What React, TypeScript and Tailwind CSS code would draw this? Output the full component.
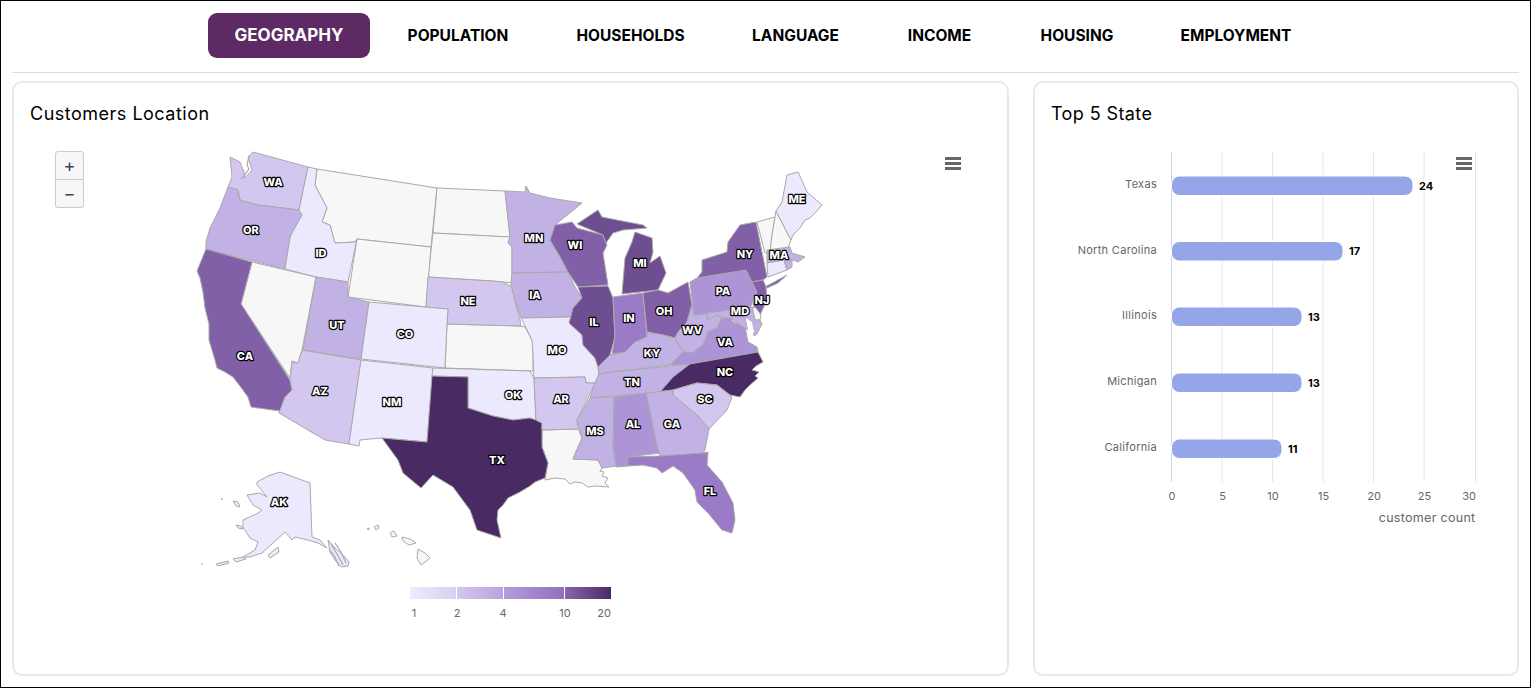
const FONT = "font-['Inter','Liberation_Sans',sans-serif]";

const C1 = '#ece8fd';
const C2 = '#d3c7ef';
const C3 = '#c2b1e4';
const C4 = '#ac94d7';
const C5 = '#9b7bc8';
const C6 = '#8160a8';
const C7 = '#6d4e91';
const C8 = '#4a2a63';
const NONE = '#f7f7f7';

const tabs = [
  { name: 'GEOGRAPHY', w: 'w-[162px]', active: true },
  { name: 'POPULATION', w: 'w-[154px] ml-[11px]' },
  { name: 'HOUSEHOLDS', w: 'w-[159px] ml-[16px]' },
  { name: 'LANGUAGE', w: 'w-[139px] ml-[16px]' },
  { name: 'INCOME', w: 'w-[117px] ml-[16px]' },
  { name: 'HOUSING', w: 'w-[126px] ml-[16px]' },
  { name: 'EMPLOYMENT', w: 'w-[160px] ml-[16px]' },
];

const states: { fill: string; d: string }[] = [
  { fill: NONE, d: '252,262 316,277 302,350 298,363 292,361 290,378 241,304' }, // NV
  { fill: NONE, d: '317,169 437,188 431,247 357,239 355,242 335,243 330,225 322,222 327,208 315,185' }, // MT
  { fill: NONE, d: '437,188 505,191 510,237 433,233' }, // ND
  { fill: NONE, d: '433,233 510,237 508,243 512,247 512,283 503,282 492,281 428,277' }, // SD
  { fill: NONE, d: '357,239 431,247 426,307 348,297' }, // WY
  { fill: NONE, d: '447,324 520,326 525,327 533,342 533,371 445,368' }, // KS
  { fill: NONE, d: '542,430 578,429 582,438 573,459 598,460 602,468 600,471 604,472 602,476 608,478 605,483 609,487 596,486 588,487 582,483 575,482 570,484 565,479 555,478 545,480 548,463 542,447' }, // LA
  { fill: NONE, d: '757,222 775,217 772,235 770,252 765,253' }, // VT
  { fill: NONE, d: '775,217 776,211 791,240 788,248 770,252 772,235' }, // NH
  { fill: C2, d: '253,152 308,167 299,210 283,208 257,205 240,200 238,190 228,187 232,177 230,157 240,162 244,172 245,178 252,170 248,157' }, // WA
  { fill: C3, d: '228,187 238,190 240,200 257,205 283,208 299,210 302,215 292,233 290,238 285,269 206,249 206,242 210,228 220,208' }, // OR
  { fill: C6, d: '206,249 252,262 241,304 290,380 292,390 285,397 280,411 251,407 248,397 240,386 233,377 225,372 217,368 215,360 209,340 209,324 205,308 203,292 200,278 197,271' }, // CA
  { fill: C1, d: '308,167 317,169 315,185 327,208 322,222 330,225 335,243 355,242 357,239 348,282 316,277 285,269 290,238 292,233 302,215 299,210' }, // ID
  { fill: C2, d: '428,277 492,281 503,282 512,287 515,302 520,320 521,326 447,324 448,309 426,307' }, // NE
  { fill: C3, d: '316,277 348,282 348,297 369,302 361,359 303,350' }, // UT
  { fill: C1, d: '369,302 448,309 447,324 445,368 361,359' }, // CO
  { fill: C2, d: '302,350 361,360 349,444 325,440 279,413 285,397 292,390 290,380 292,362 298,363' }, // AZ
  { fill: C1, d: '361,360 433,368 427,442 381,438 360,440 359,446 349,444' }, // NM
  { fill: C1, d: '433,368 530,371 534,378 536,420 530,418 513,420 493,416 468,408 468,377 432,376' }, // OK
  { fill: C8, d: '432,376 468,377 468,408 493,416 513,420 530,418 536,420 542,423 542,447 548,463 545,478 535,482 530,486 520,492 508,498 503,505 498,510 497,520 501,538 477,530 470,510 453,487 433,475 421,488 403,473 398,460 382,438 427,442' }, // TX
  { fill: C3, d: '505,191 525,192 526,186 530,193 550,198 582,203 555,225 550,240 559,255 568,272 512,273 512,247 508,243 510,237' }, // MN
  { fill: C3, d: '512,273 568,272 575,287 582,298 573,308 572,317 521,318 515,300 511,285' }, // IA
  { fill: C1, d: '521,318 572,317 570,323 582,335 583,345 595,358 598,367 599,374 595,383 586,383 585,377 534,378 533,355 532,340' }, // MO
  { fill: C2, d: '534,378 585,377 586,383 595,383 588,398 577,420 578,429 542,430 542,423 536,420' }, // AR
  { fill: C6, d: '555,225 572,222 577,228 603,235 607,245 603,253 608,285 578,287 568,272 559,255 550,240' }, // WI
  { fill: C7, d: '577,224 598,210 602,217 617,220 643,225 647,228 623,230 613,233 606,243 603,235' }, // MI upper
  { fill: C7, d: '635,232 652,238 653,252 650,263 660,256 666,273 658,290 622,294 625,258 632,242' }, // MI lower
  { fill: C7, d: '578,287 608,286 613,298 615,337 610,355 598,367 595,358 583,345 582,335 569,323 573,308 582,298' }, // IL
  { fill: C5, d: '613,297 643,293 647,337 635,342 625,352 612,354 615,337' }, // IN
  { fill: C6, d: '643,293 658,290 668,293 688,282 692,305 687,322 678,332 675,338 663,335 647,332' }, // OH
  { fill: C3, d: '647,332 663,335 675,338 683,352 670,365 613,372 599,374 598,367 610,355 625,352 635,342 647,337' }, // KY
  { fill: C3, d: '599,374 613,372 690,364 673,377 661,392 590,398 595,383' }, // TN
  { fill: C3, d: '675,338 678,332 687,322 692,305 694,315 707,313 708,320 717,315 722,318 717,328 708,332 703,345 692,353 683,352' }, // WV
  { fill: C4, d: '670,365 683,352 692,353 703,345 708,332 717,328 722,318 730,318 733,322 745,327 748,342 757,347 758,352 690,364' }, // VA
  { fill: C8, d: '660,392 673,377 690,364 758,352 763,362 756,366 752,370 759,372 755,376 758,378 750,385 745,390 740,397 730,395 717,385 697,383 673,390' }, // NC
  { fill: C2, d: '673,390 697,383 717,385 732,397 727,410 709,429 697,415 673,395' }, // SC
  { fill: C3, d: '646,393 673,390 673,395 697,415 709,429 705,450 703,453 660,456 657,447' }, // GA
  { fill: C4, d: '614,397 646,393 657,447 660,453 627,457 628,466 616,467 613,447' }, // AL
  { fill: C3, d: '590,398 614,397 613,447 616,466 602,468 598,460 573,459 582,438 577,420' }, // MS
  { fill: C5, d: '627,457 660,456 703,453 708,452 707,465 722,482 733,503 735,520 732,533 722,530 708,513 697,502 695,490 683,473 673,466 662,473 657,468 643,465 628,466' }, // FL
  { fill: C4, d: '690,282 697,278 746,270 752,280 758,290 750,308 694,315' }, // PA
  { fill: C6, d: '697,278 702,272 702,260 727,252 728,242 740,225 756,222 767,277 763,280 752,282 746,270' }, // NY
  { fill: C6, d: '765,287 787,275 778,283 767,288' }, // Long Island
  { fill: C6, d: '752,282 763,280 766,287 767,300 760,315 753,305 757,292' }, // NJ
  { fill: NONE, d: '752,307 756,308 761,315 760,320 755,320' }, // DE
  { fill: C3, d: '707,313 752,307 755,320 760,320 762,324 757,334 754,336 752,322 745,318 748,330 740,325 730,318 722,318 717,315 708,320' }, // MD
  { fill: C1, d: '787,175 798,172 807,192 822,205 816,212 810,218 805,220 800,228 793,235 791,240 776,211 782,202' }, // ME
  { fill: C3, d: '767,250 790,247 792,253 805,257 798,262 793,260 785,260 767,263' }, // MA
  { fill: C1, d: '767,263 784,260 787,270 768,277' }, // CT
  { fill: C3, d: '784,260 792,260 792,267 787,270' }, // RI
  { fill: C1, d: '257,482 268,476 280,472 310,483 312,537 320,540 327,548 318,543 308,540 295,537 292,540 285,532 273,543 262,553 250,557 243,557 255,550 258,542 250,538 243,527 243,520 258,513 262,510 253,505 247,495 260,493 267,497 263,492 257,485' }, // AK
  { fill: C1, d: '328,540 335,548 344,556 349,562 348,566 341,567 335,560 330,552' }, // AK panhandle
  { fill: C1, d: '268,555 278,547 279,552 270,558' }, // Kodiak
  { fill: C1, d: '233,501 238,502 240,507 236,506' }, // St Lawrence
  { fill: C1, d: '236,525 241,526 243,529 238,528' }, // Nunivak
  { fill: C1, d: '233,559 243,557 246,559 236,562' }, // Aleutians
  { fill: C1, d: '216,564 228,561 229,563 218,566' },
  { fill: NONE, d: '374,527 378,525 379,528 376,530' }, // Kauai
  { fill: NONE, d: '367,529 369,528 369,530' }, // Niihau
  { fill: NONE, d: '390,533 394,531 397,536 392,537' }, // Oahu
  { fill: NONE, d: '402,537 410,539 416,543 409,545 403,541' }, // Maui
  { fill: NONE, d: '418,549 425,553 430,558 421,565 417,558' }, // Big Island
];

// thin coast squiggles that are too small for their own shapes
const squiggles = [
  'M249,156 L247,165 L249,169 L244,176 L241,179',
  'M331,544 L337,554 L343,565',
  'M335,543 L341,552 L346,563',
  'M329,549 L335,557 L339,566',
  'M201,564 L203,564',
  'M222,498 L222,500',
];

const labels: [string, number, number][] = [
  ['WA', 273, 182], ['OR', 251, 230], ['ID', 321, 253], ['CA', 245, 356], ['UT', 337, 325],
  ['CO', 405, 334], ['AZ', 320, 391], ['NM', 392, 402], ['TX', 497, 460], ['NE', 468, 301],
  ['MN', 534, 238], ['IA', 535, 295], ['WI', 575, 245], ['MI', 640, 263], ['IL', 594, 322],
  ['IN', 629, 318], ['OH', 664, 311], ['KY', 652, 353], ['TN', 632, 382], ['MO', 557, 350],
  ['AR', 561, 399], ['OK', 513, 395], ['MS', 595, 431], ['AL', 633, 424], ['GA', 672, 424],
  ['SC', 705, 399], ['NC', 725, 372], ['FL', 710, 491], ['VA', 725, 342], ['WV', 692, 330],
  ['PA', 723, 291], ['NY', 745, 254], ['NJ', 762, 300], ['MD', 740, 311], ['MA', 779, 255],
  ['ME', 797, 199], ['AK', 279, 502],
];

const legendTicks: [string, number][] = [['1', 414], ['2', 457], ['4', 503], ['10', 565], ['20', 604]];

const bars = [
  { name: 'Texas', value: 24, y: 176, end: 1413 },
  { name: 'North Carolina', value: 17, y: 241.5, end: 1343 },
  { name: 'Illinois', value: 13, y: 307, end: 1302 },
  { name: 'Michigan', value: 13, y: 373, end: 1302 },
  { name: 'California', value: 11, y: 439, end: 1282 },
];

const axisTicks = [0, 5, 10, 15, 20, 25, 30];

function Burger() {
  return (
    <svg width="18" height="15" viewBox="0 0 18 15" className="absolute top-0 left-0">
      <path d="M1 2.5H17M1 7.5H17M1 12.5H17" stroke="#666666" strokeWidth="3" />
    </svg>
  );
}

function UsMap() {
  return (
    <svg viewBox="30 145 962 480" width="962" height="480" className="block mt-[18px]">
      <defs>
        <linearGradient id="seg1"><stop offset="0" stopColor="#efecfe" /><stop offset="1" stopColor="#d8cff0" /></linearGradient>
        <linearGradient id="seg2"><stop offset="0" stopColor="#d3c7ee" /><stop offset="1" stopColor="#b8a4de" /></linearGradient>
        <linearGradient id="seg3"><stop offset="0" stopColor="#b59cdc" /><stop offset="1" stopColor="#9070bb" /></linearGradient>
        <linearGradient id="seg4"><stop offset="0" stopColor="#8a66ad" /><stop offset="1" stopColor="#4a2a63" /></linearGradient>
      </defs>
      {states.map((s, i) => (
        <polygon key={i} points={s.d} fill={s.fill} stroke="#a9a9a9" strokeWidth="1" strokeLinejoin="round" />
      ))}
      {/* bay cut-outs */}
      <polygon points="746,318 752,322 754,332 750,338 748,330" fill="#ffffff" />
      {squiggles.map((d) => (
        <path key={d} d={d} fill="none" stroke="#a9a9a9" strokeWidth="1.2" />
      ))}
      {labels.map(([t, x, y]) => (
        <text
          key={t}
          x={x}
          y={y + 4}
          textAnchor="middle"
          fontSize="11"
          fontWeight="800"
          fill="#ffffff"
          stroke="#000000"
          strokeWidth="2.4"
          strokeLinejoin="round"
          paintOrder="stroke"
        >
          {t}
        </text>
      ))}
      <rect x="410" y="587" width="46" height="12" fill="url(#seg1)" />
      <rect x="457" y="587" width="46" height="12" fill="url(#seg2)" />
      <rect x="504" y="587" width="60" height="12" fill="url(#seg3)" />
      <rect x="565" y="587" width="46" height="12" fill="url(#seg4)" />
      {legendTicks.map(([t, x]) => (
        <text key={t} x={x} y={617} textAnchor="middle" fontSize="11" fill="#666666">{t}</text>
      ))}
    </svg>
  );
}

function BarChart() {
  const gridX = [1222, 1272.5, 1323, 1373.5, 1424, 1475.5];
  return (
    <svg viewBox="1051 145 449 385" width="449" height="385" className="block mt-[18px]">
      {gridX.map((x) => (
        <line key={x} x1={x} x2={x} y1="152" y2="482" stroke="#e6e6e6" strokeWidth="1" />
      ))}
      <line x1="1171.5" x2="1171.5" y1="152" y2="482" stroke="#ccd6eb" strokeWidth="1" />
      {bars.map((b) => (
        <g key={b.name}>
          <rect x="1171.5" y={b.y} width={b.end - 1171.5} height="19.5" rx="8" fill="#94a6e8" stroke="#ffffff" strokeWidth="1" />
          <text x="1157" y={b.y + 12} textAnchor="end" fontSize="11" letterSpacing="0.3" fill="#666666">{b.name}</text>
          <text x={b.end + 6} y={b.y + 13.5} fontSize="11" fontWeight="700" fill="#000000" stroke="#ffffff" strokeWidth="2" paintOrder="stroke">
            {b.value}
          </text>
        </g>
      ))}
      {axisTicks.map((t, i) => (
        <text key={t} x={i === 6 ? 1469 : 1172 + i * 50.5} y="500" textAnchor="middle" fontSize="11" fill="#666666">{t}</text>
      ))}
      <text x="1475.5" y="522" textAnchor="end" fontSize="12.5" letterSpacing="0.3" fill="#666666">customer count</text>
    </svg>
  );
}

export default function App() {
  return (
    <div className={`${FONT} w-[1531px] h-[688px] border border-black bg-white overflow-hidden`}>
      <div className="flex h-[71px] pt-[12px] pl-[207px] items-start">
        {tabs.map((t) => (
          <div
            key={t.name}
            className={`${t.w} h-[45px] flex items-center justify-center rounded-[9px] font-bold ${
              t.active ? 'bg-[#5d2a64] text-white text-[17px]' : 'text-black text-[15.5px]'
            }`}
          >
            {t.name}
          </div>
        ))}
      </div>
      <div className="mx-[11px] h-px bg-[#dddddd]" />
      <div className="flex mt-[8px] pl-[11px]">
        <div className="relative w-[997px] h-[595px] rounded-[10px] border-2 border-[#e9e9e9] pl-[16px] pt-[17px]">
          <h2 className="text-[18px] leading-[27px] text-black tracking-[0.5px]">Customers Location</h2>
          <UsMap />
          <div className="absolute left-[41px] top-[68px] w-[29px] h-[57px] rounded-[3px] border border-[#cccccc] bg-[#f7f7f7] flex flex-col text-[#33465c]">
            <div className="h-[28px] flex items-center justify-center border-b border-[#cccccc] text-[18px] leading-none">+</div>
            <div className="flex-1 flex items-center justify-center text-[18px] leading-none">−</div>
          </div>
          <div className="absolute left-[930px] top-[73px] w-[18px] h-[15px]"><Burger /></div>
        </div>
        <div className="relative ml-[24px] w-[486px] h-[595px] rounded-[10px] border-2 border-[#e9e9e9] pl-[16px] pt-[17px]">
          <h2 className="text-[18px] leading-[27px] text-black tracking-[0.4px]">Top 5 State</h2>
          <BarChart />
          <div className="absolute left-[420px] top-[73px] w-[18px] h-[15px]"><Burger /></div>
        </div>
      </div>
    </div>
  );
}
